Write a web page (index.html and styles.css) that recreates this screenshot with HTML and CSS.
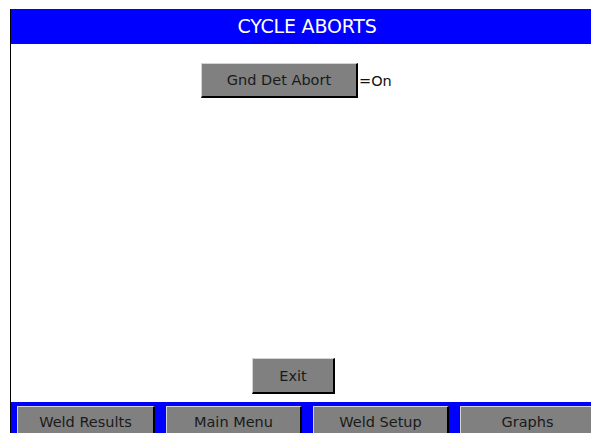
FILE: index.html
```html
<!DOCTYPE html>
<html lang="en">
<head>
    <meta charset="UTF-8">
    <meta name="viewport" content="width=device-width, initial-scale=1.0">
    <title>Cycle Aborts</title>
    <link rel="stylesheet" href="styles.css">
</head>
<body>
    <div class="screen">
        <div class="title">CYCLE ABORTS</div>
        <div class="content">
            <div class="setting">
                <button type="button" class="btn btn-setting">Gnd Det Abort</button>
                <span class="value">=On</span>
            </div>
            <div class="exit-row">
                <button type="button" class="btn btn-exit">Exit</button>
            </div>
        </div>
        <div class="nav">
            <button type="button" class="btn btn-nav">Weld Results</button>
            <button type="button" class="btn btn-nav">Main Menu</button>
            <button type="button" class="btn btn-nav">Weld Setup</button>
            <button type="button" class="btn btn-nav">Graphs</button>
        </div>
    </div>
</body>
</html>
```

FILE: styles.css
```css
body {
    margin: 0;
    background-color: #fff;
    font-family: "DejaVu Sans", Tahoma, sans-serif;
    overflow: hidden;
}
.screen {
    margin: 9px 0 0 10px;
    height: 424px;
    border-left: 1px solid #000;
    display: flex;
    flex-direction: column;
    overflow: hidden;
}
.title {
    height: 35px;
    background-color: #0000ff;
    color: #fff;
    font-size: 19px;
    line-height: 35px;
    text-align: center;
    letter-spacing: -0.2px;
    padding-left: 12px;
}
.content {
    flex: 1;
    display: flex;
    flex-direction: column;
    justify-content: space-between;
    padding: 19px 0 8px;
}
.setting {
    display: flex;
    align-items: center;
    padding-left: 190px;
}
.value {
    font-size: 14.5px;
    color: #111;
    margin-left: 1px;
}
.exit-row {
    padding-left: 241px;
}
.btn {
    background-color: #808080;
    color: #1a1a1a;
    font-family: inherit;
    font-size: 14.5px;
    border-style: solid;
    border-width: 1px 2px 2px 1px;
    border-color: #d4d4d4 #000 #000 #d4d4d4;
    padding: 0;
    cursor: pointer;
}
.btn-setting {
    width: 157px;
    height: 35px;
}
.btn-exit {
    width: 83px;
    height: 36px;
}
.nav {
    height: 31px;
    background-color: #0000ff;
    display: flex;
    gap: 11px;
    padding: 4px 0 0 6px;
    box-sizing: border-box;
}
.btn-nav {
    flex: 0 0 136px;
    height: 30px;
    border-width: 1px 2px 0 1px;
}
.btn-nav:first-child {
    flex-basis: 138px;
}
```
